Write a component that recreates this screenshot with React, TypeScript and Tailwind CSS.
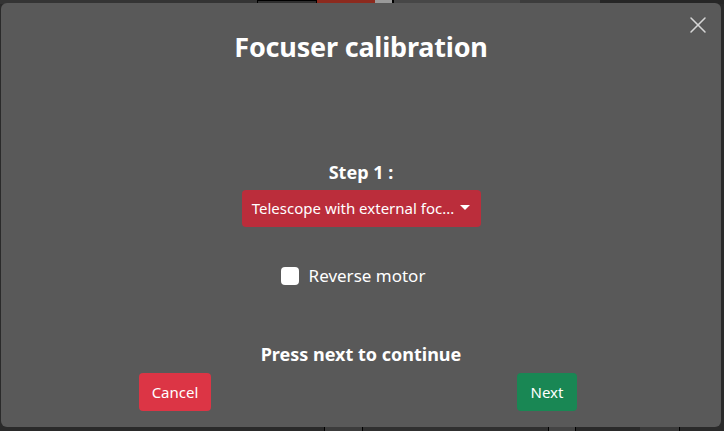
import { X } from 'lucide-react';

function Backdrop() {
  // page behind the modal, only a sliver of it shows at top and bottom
  return (
    <div className="flex h-full flex-col justify-between bg-[#2a2a2a]">
      <div className="flex h-[4px]">
        <div className="w-[257px] bg-[#343434]" />
        <div className="w-[60px] border border-black bg-[#2e2e2e]" />
        <div className="w-[58px] bg-[#8c2a1e]" />
        <div className="w-[17px] bg-[#9a9a9a]" />
        <div className="w-[128px] border-l-2 border-black bg-[#474747]" />
        <div className="w-[80px] bg-[#3c3c3c]" />
        <div className="flex-1 bg-[#262626]" />
      </div>
      <div className="flex h-[4px]">
        <div className="w-[324px]" />
        <div className="w-[38px] border-l border-black bg-[#3c3c3c]" />
        <div className="w-[186px] border-l border-black bg-[#303030]" />
        <div className="w-[28px] border-x border-black bg-[#444]" />
        <div className="w-[64px]" />
        <div className="w-[40px] border-r border-black bg-[#3a3a3a]" />
      </div>
    </div>
  );
}

function Modal() {
  return (
    <div className="absolute left-[1px] top-[3px] flex h-[424px] w-[720px] flex-col items-center rounded-md bg-[#595959] pt-[25px] text-white">
      <button type="button" className="absolute right-[9px] top-[8px] text-[#d6d6d6]" aria-label="Close">
        <X className="h-[28px] w-[28px]" strokeWidth={1.3} />
      </button>

      <h1 className="text-[27px] font-bold leading-[38px] tracking-[-0.2px]">Focuser calibration</h1>

      <div className="mt-[94px] flex flex-col items-center gap-[6px]">
        <div className="text-[18px] font-bold leading-[24px]">Step 1 :</div>
        <button
          type="button"
          className="flex h-[37px] w-[239px] items-center justify-center gap-[6px] rounded-[4px] bg-[#bb2d3b] text-[15px] text-white"
        >
          <span>Telescope with external foc...</span>
          <span className="mt-[-2px] h-0 w-0 border-x-[5px] border-t-[5px] border-x-transparent border-t-white" />
        </button>
      </div>

      <label className="mt-[37px] mr-[16px] flex items-center gap-[10px] text-[17px] leading-[24px]">
        <span className="h-[18px] w-[18px] rounded-[4px] bg-white" />
        <span>Reverse motor</span>
      </label>

      <div className="mt-[54px] flex flex-col items-center gap-[7px]">
        <div className="text-[18px] font-bold leading-[24px]">Press next to continue</div>
        <div className="mr-[6px] flex w-[438px] justify-between">
          <button type="button" className="h-[38px] w-[72px] rounded-[4px] bg-[#dc3545] text-[15px] text-white">
            Cancel
          </button>
          <button type="button" className="h-[38px] w-[60px] rounded-[4px] bg-[#198754] text-[15px] text-white">
            Next
          </button>
        </div>
      </div>
    </div>
  );
}

export default function App() {
  return (
    <div
      className="relative h-[431px] w-[724px] overflow-hidden"
      style={{ fontFamily: '"Noto Sans", "Open Sans", sans-serif' }}
    >
      <Backdrop />
      <Modal />
    </div>
  );
}
